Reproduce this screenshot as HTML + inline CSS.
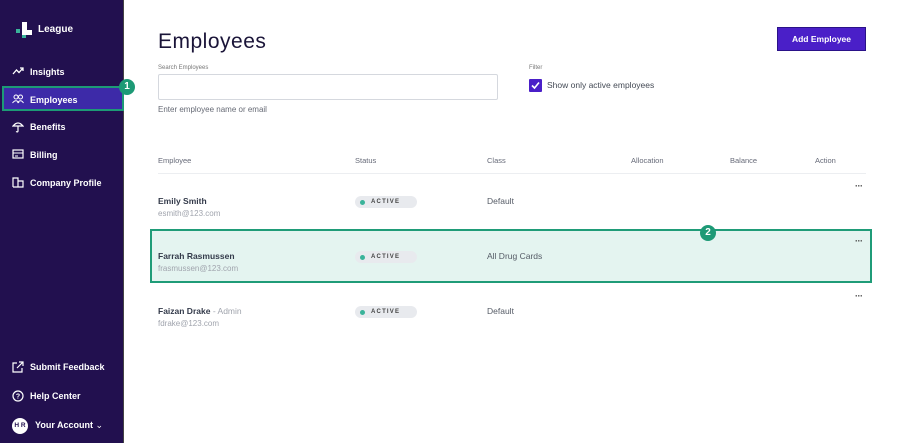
<!DOCTYPE html>
<html><head><style>
*{margin:0;padding:0;box-sizing:border-box}
body{width:900px;height:443px;overflow:hidden;background:#fff;font-family:"Liberation Sans",sans-serif;position:relative;color:#2a2a3a}
.a{position:absolute;white-space:nowrap}
#sb{position:absolute;left:0;top:0;width:124px;height:443px;background:#22104f;border-right:1px solid #444}
.nav{position:absolute;left:12px;color:#fff;font-size:9px;font-weight:bold}
.nav svg{position:absolute;left:0;top:-1px}
.nav span{position:absolute;left:18px;top:0;white-space:nowrap}
.hd{font-size:7.5px;color:#666a78}
.nm{font-size:8.5px;font-weight:bold;color:#333a4a}
.em{font-size:8px;color:#a0a4ad}
.badge{position:absolute;left:355px;width:62px;height:12px;border-radius:6px;background:#e8eaee;white-space:nowrap}
.badge b{position:absolute;left:16px;top:3px;font-size:6px;line-height:6px;letter-spacing:1.2px;color:#444}
.badge:before{content:"";position:absolute;left:5px;top:3.5px;width:5px;height:5px;border-radius:50%;background:#3ab39a}
.cls{font-size:8.5px;color:#555b66}
.dots{font-size:9px;color:#444;font-weight:bold;letter-spacing:-0.5px}
.num{position:absolute;width:16px;height:16px;border-radius:50%;background:#1d9a76;color:#fff;font-size:10px;font-weight:bold;text-align:center;line-height:16px}
</style></head><body>
<div id="sb">
 <div class="a" style="left:22px;top:22px;width:5px;height:13px;background:#fff"></div>
 <div class="a" style="left:22px;top:30px;width:10px;height:5px;background:#fff"></div>
 <div class="a" style="left:16px;top:29px;width:4px;height:4px;background:#3ab39a"></div>
 <div class="a" style="left:22px;top:35px;width:4px;height:3px;background:#3ab39a"></div>
 <div class="a" style="left:38px;top:24px;color:#fff;font-weight:bold;font-size:10px">League</div>
 <div class="nav" style="top:67px"><svg width="12" height="10"><path d="M1 8 L4.5 4 L7 6.5 L11 2 M8 2 H11 V5" stroke="#fff" stroke-width="1.3" fill="none"/></svg><span>Insights</span></div>
 <div class="a" style="left:2px;top:86px;width:122px;height:25px;background:#3d2aa8;border:2px solid #1d9a76"></div>
 <div class="nav" style="top:95px"><svg width="12" height="10"><circle cx="4" cy="3" r="2" stroke="#fff" fill="none"/><circle cx="8.5" cy="3" r="2" stroke="#fff" fill="none"/><path d="M0.5 9 Q4 4.5 7 9 M5.5 9 Q8.5 4.5 11.5 9" stroke="#fff" fill="none"/></svg><span>Employees</span></div>
 <div class="nav" style="top:122px"><svg width="12" height="12"><path d="M1 5 Q6 -1 11 5 Z M6 5 V10 Q6 11.5 4 10.5" stroke="#fff" stroke-width="1.2" fill="none"/></svg><span>Benefits</span></div>
 <div class="nav" style="top:150px"><svg width="12" height="10"><rect x="1" y="1" width="10" height="8" stroke="#fff" stroke-width="1.2" fill="none"/><path d="M1 4 H11 M3 7 H6" stroke="#fff"/></svg><span>Billing</span></div>
 <div class="nav" style="top:178px"><svg width="12" height="11"><path d="M1 10 V1 H6 V10 M6 4 H11 V10 H1" stroke="#fff" stroke-width="1.2" fill="none"/></svg><span>Company Profile</span></div>
 <div class="nav" style="top:362px"><svg width="12" height="12"><path d="M5 2 H1 V11 H10 V7 M7 1 H11 V5 M11 1 L5 7" stroke="#fff" stroke-width="1.2" fill="none"/></svg><span>Submit Feedback</span></div>
 <div class="nav" style="top:391px"><svg width="12" height="12"><circle cx="6" cy="6" r="5" stroke="#fff" stroke-width="1.2" fill="none"/><text x="6" y="8.5" font-size="7" fill="#fff" text-anchor="middle" font-weight="bold">?</text></svg><span>Help Center</span></div>
 <div class="a" style="left:12px;top:418px;width:16px;height:16px;border-radius:50%;background:#fff;color:#22104f;font-size:6.5px;font-weight:bold;text-align:center;line-height:16px">H R</div>
 <div class="a" style="left:35px;top:420px;color:#fff;font-size:9px;font-weight:bold">Your Account <span style="font-weight:normal">&#8964;</span></div>
</div>
<div class="num" style="left:119px;top:79px">1</div>

<div class="a" style="left:158px;top:30px;font-size:21px;color:#1a1438;letter-spacing:0.5px">Employees</div>
<div class="a" style="left:777px;top:27px;width:89px;height:24px;background:#4a1fc8;border:1px solid #2a1288;color:#fff;font-size:8.5px;font-weight:bold;text-align:center;line-height:22px">Add Employee</div>
<div class="a" style="left:158px;top:65px;font-size:6px;color:#777">Search Employees</div>
<div class="a" style="left:158px;top:74px;width:340px;height:26px;border:1px solid #d5d8de;border-radius:2px"></div>
<div class="a" style="left:158px;top:105px;font-size:8px;color:#666a75">Enter employee name or email</div>
<div class="a" style="left:529px;top:65px;font-size:6px;color:#777">Filter</div>
<div class="a" style="left:529px;top:79px;width:13px;height:13px;background:#4a1fc8;border-radius:1px"><svg width="13" height="13"><path d="M3 6.5 L5.5 9 L10 3.5" stroke="#fff" stroke-width="1.6" fill="none"/></svg></div>
<div class="a" style="left:547px;top:80px;font-size:8.5px;color:#444a55">Show only active employees</div>

<div class="a hd" style="left:158px;top:156px">Employee</div>
<div class="a hd" style="left:355px;top:156px">Status</div>
<div class="a hd" style="left:487px;top:156px">Class</div>
<div class="a hd" style="left:631px;top:156px">Allocation</div>
<div class="a hd" style="left:730px;top:156px">Balance</div>
<div class="a hd" style="left:815px;top:156px">Action</div>
<div class="a" style="left:158px;top:173px;width:708px;height:1px;background:#eceef1"></div>

<div class="a" style="left:150px;top:229px;width:722px;height:54px;background:#e4f4f0;border:2px solid #1f9c78"></div>
<div class="num" style="left:700px;top:225px">2</div>

<div class="a nm" style="left:158px;top:196px">Emily Smith</div>
<div class="a em" style="left:158px;top:209px">esmith@123.com</div>
<div class="badge" style="top:196px"><b>ACTIVE</b></div>
<div class="a cls" style="left:487px;top:196px">Default</div>
<div class="a dots" style="left:855px;top:181px">···</div>

<div class="a nm" style="left:158px;top:251px">Farrah Rasmussen</div>
<div class="a em" style="left:158px;top:264px">frasmussen@123.com</div>
<div class="badge" style="top:251px"><b>ACTIVE</b></div>
<div class="a cls" style="left:487px;top:251px">All Drug Cards</div>
<div class="a dots" style="left:855px;top:236px">···</div>

<div class="a nm" style="left:158px;top:306px">Faizan Drake <span style="color:#a0a4ad;font-weight:normal">- Admin</span></div>
<div class="a em" style="left:158px;top:319px">fdrake@123.com</div>
<div class="badge" style="top:306px"><b>ACTIVE</b></div>
<div class="a cls" style="left:487px;top:306px">Default</div>
<div class="a dots" style="left:855px;top:291px">···</div>
</body></html>
